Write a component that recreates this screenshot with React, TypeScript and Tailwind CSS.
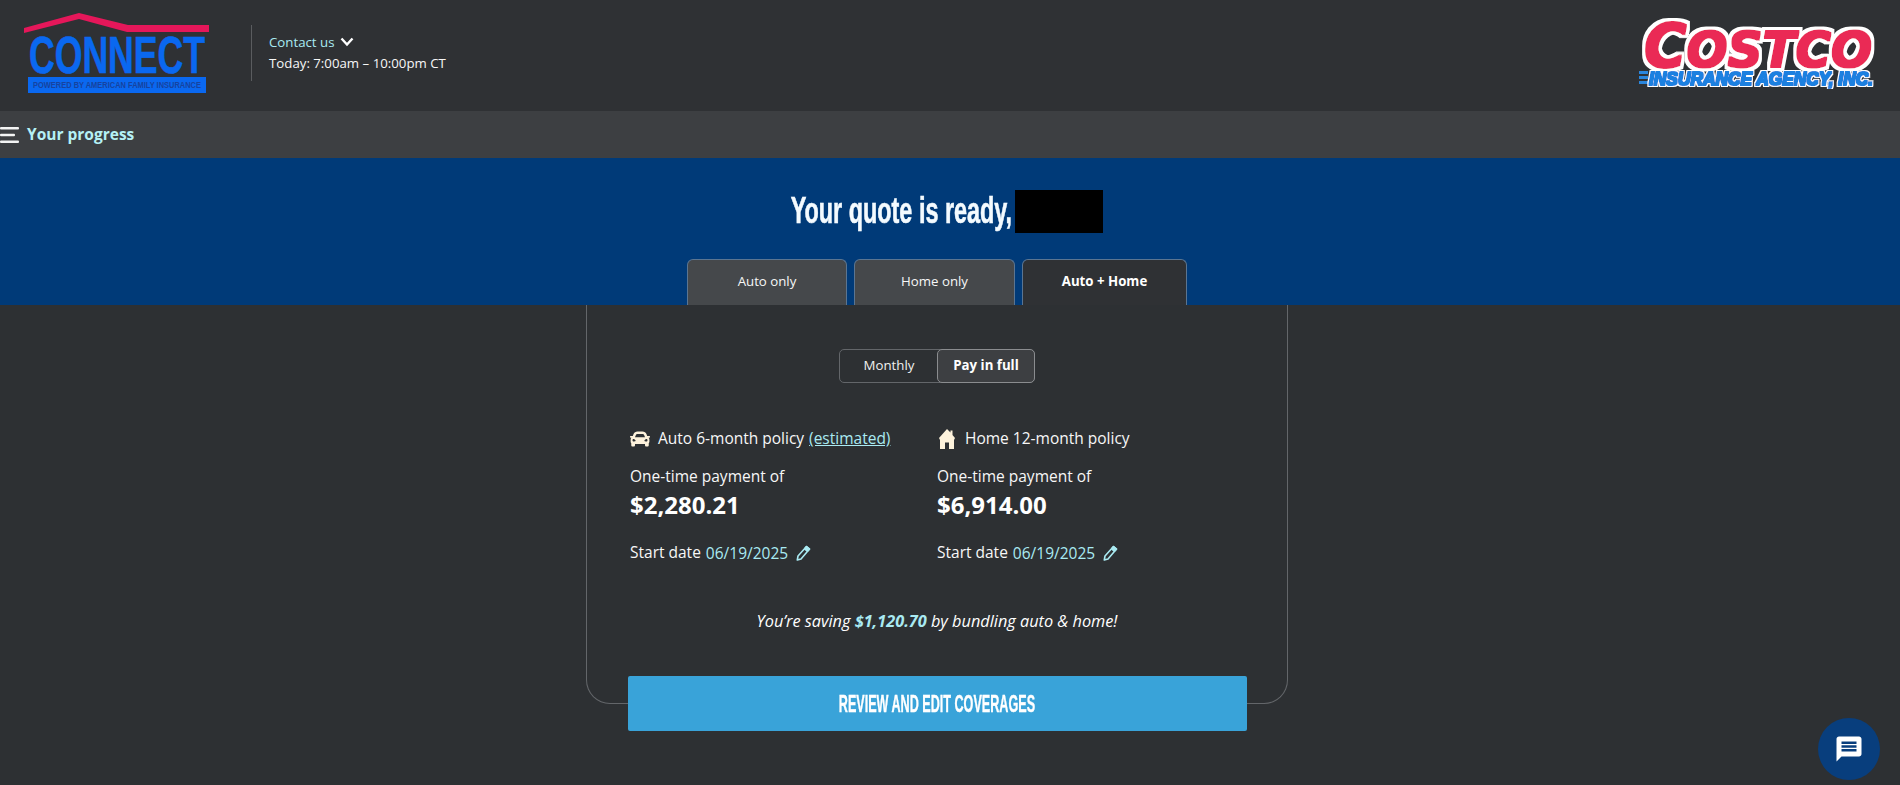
import React from "react";
import { FaCar } from "react-icons/fa";

const sans = "font-['Open_Sans',sans-serif]";
const wide = "font-['Liberation_Sans',sans-serif]";

function ConnectLogo() {
  return (
    <svg width="186" height="80" viewBox="0 0 186 80" className="block shrink-0">
      <path d="M0 15 L55 0 L104 12 L185 12 L185 19 L103 19 L55 6 L0 20 Z" fill="#e5175a" />
      <text x="5" y="60" textLength="176" lengthAdjust="spacingAndGlyphs" fontFamily="'Liberation Sans',sans-serif" fontWeight="700" fontSize="51" fill="#0a68f0" stroke="#0a68f0" strokeWidth="0.6">CONNECT</text>
      <rect x="4" y="64" width="178" height="16" fill="#0a68f0" />
      <text x="9" y="75" textLength="168" lengthAdjust="spacingAndGlyphs" fontFamily="'Liberation Sans',sans-serif" fontWeight="700" fontSize="9" fill="#17439f">POWERED BY AMERICAN FAMILY INSURANCE</text>
    </svg>
  );
}

function CostcoLogo() {
  return (
    <svg width="240" height="72" viewBox="0 0 240 72" className="block shrink-0">
      <defs>
        <filter id="costco-red" x="-5%" y="-20%" width="110%" height="140%">
          <feMorphology in="SourceAlpha" operator="dilate" radius="4" result="w" />
          <feFlood floodColor="#ffffff" />
          <feComposite in2="w" operator="in" result="white" />
          <feMorphology in="SourceAlpha" operator="dilate" radius="1.2" result="r" />
          <feFlood floodColor="#ea2a55" />
          <feComposite in2="r" operator="in" result="red" />
          <feMerge>
            <feMergeNode in="white" />
            <feMergeNode in="red" />
          </feMerge>
        </filter>
        <filter id="costco-blue" x="-3%" y="-20%" width="106%" height="140%">
          <feMorphology in="SourceAlpha" operator="dilate" radius="2.2" result="w" />
          <feFlood floodColor="#ffffff" />
          <feComposite in2="w" operator="in" result="white" />
          <feMorphology in="SourceAlpha" operator="dilate" radius="0.5" result="b" />
          <feFlood floodColor="#1f80e0" />
          <feComposite in2="b" operator="in" result="blue" />
          <feMerge>
            <feMergeNode in="white" />
            <feMergeNode in="blue" />
          </feMerge>
        </filter>
      </defs>
      <text x="6" y="50" textLength="228" lengthAdjust="spacingAndGlyphs" fontFamily="'DejaVu Sans',sans-serif" fontWeight="700" fontStyle="italic" fill="#ea2a55" filter="url(#costco-red)">
        <tspan fontSize="60">C</tspan><tspan fontSize="50">OSTCO</tspan>
      </text>
      <rect x="1" y="54" width="9" height="3" fill="#2a86dd" />
      <rect x="1" y="59" width="9" height="3" fill="#2a86dd" />
      <rect x="1" y="64" width="9" height="3" fill="#2a86dd" />
      <text x="11" y="68" textLength="224" lengthAdjust="spacingAndGlyphs" fontFamily="'Liberation Sans',sans-serif" fontWeight="700" fontStyle="italic" fontSize="18" fill="#1f80e0" filter="url(#costco-blue)">INSURANCE AGENCY, INC.</text>
    </svg>
  );
}

function Hamburger() {
  return (
    <svg width="20" height="16" viewBox="0 0 20 16" className="block shrink-0">
      <rect x="0" y="0" width="19" height="2.4" rx="1" fill="#f4f4f4" />
      <rect x="0" y="6.8" width="15" height="2.4" rx="1" fill="#f4f4f4" />
      <rect x="0" y="13.6" width="19" height="2.4" rx="1" fill="#f4f4f4" />
    </svg>
  );
}

function HouseIcon() {
  return (
    <svg width="20" height="20" viewBox="0 0 20 20" className="block shrink-0">
      <path d="M10 0 L13.5 3.5 V1.5 H15.5 V6 L18 9 L17 11 V20 H12 V13.5 H8 V20 H3 V11 L2 9 Z" fill="#fdf2dc" />
    </svg>
  );
}

function PencilIcon() {
  return (
    <svg width="15" height="16" viewBox="0 0 15 16" className="block shrink-0" fill="none" stroke="#a9eaf2" strokeWidth="1.6" strokeLinejoin="round">
      <path d="M10.5 1.5 L13.5 4 L5 14 L1.3 15 L2 11 Z" />
      <path d="M8.6 3.8 L11.6 6.4" />
      <path d="M10.5 1.5 L13.5 4 L12 5.8 L9 3.3 Z" fill="#a9eaf2" />
    </svg>
  );
}

function Policy({ icon, title, extra, amount }: { icon: React.ReactNode; title: string; extra?: boolean; amount: string }) {
  return (
    <div className="w-[307px] shrink-0">
      <div className="flex h-[24px] items-center text-[15.5px] text-[#f7f7f7]">
        <span className="flex w-[28px] shrink-0 items-center">{icon}</span>
        <span>{title}</span>
        {extra && <span className="ml-[5px] text-[#a9eaf2] underline">(estimated)</span>}
      </div>
      <div className="mt-[14px] h-[22px] text-[15.5px] leading-[22px] text-[#f7f7f7]">One-time payment of</div>
      <div className="mt-[2px] h-[32px] text-[24px] font-bold leading-[32px] text-white">{amount}</div>
      <div className="mt-[20px] flex h-[24px] items-center text-[15.5px] text-[#f7f7f7]">
        <span>Start date</span>
        <span className="ml-[5px] mt-[1px] text-[#a9eaf2]">06/19/2025</span>
        <span className="ml-[8px]"><PencilIcon /></span>
      </div>
    </div>
  );
}

export default function App() {
  return (
    <div className={`relative h-[785px] w-[1900px] overflow-hidden bg-[#2d3033] ${sans}`}>
      <header className="flex h-[111px] items-center justify-between bg-[#2f3134] pb-[6px] pl-[24px] pr-[22px]">
        <div className="flex items-center">
          <ConnectLogo />
          <div className="ml-[41px] h-[56px] w-px bg-[#5a5c5f]" />
          <div className="ml-[17px] text-[13.25px] leading-[21px]">
            <div className="flex items-center text-[#a9eaf2]">
              <span>Contact us</span>
              <svg width="14" height="10" viewBox="0 0 14 10" className="ml-[6px]" fill="none" stroke="#ffffff" strokeWidth="2.4"><path d="M1.5 1.5 L7 7.5 L12.5 1.5" /></svg>
            </div>
            <div className="text-[#f7f7f7]">Today: 7:00am – 10:00pm CT</div>
          </div>
        </div>
        <CostcoLogo />
      </header>

      <div className="flex h-[47px] items-center gap-[7px] bg-[#3d3f42]">
        <Hamburger />
        <span className="text-[15.5px] font-bold text-[#b5f1f6]">Your progress</span>
      </div>

      <div className="flex h-[147px] flex-col items-center bg-[#003a78] pr-[26px]">
        <div className="mt-[32px] flex h-[43px] items-center pl-[19px]">
          <h1 className="flex w-[222px] justify-center whitespace-nowrap pb-[2px]">
            <span className={`inline-block scale-x-[0.65] ${wide} text-[36px] font-bold leading-[41px] text-[#f4fbff] [-webkit-text-stroke:0.6px_#f4fbff]`}>Your quote is ready,</span>
          </h1>
          <div className="ml-[2px] h-[43px] w-[88px] bg-black" />
        </div>
        <div className="mt-[26px] flex h-[46px] gap-[7px]">
          <div className="flex w-[160px] items-start justify-center rounded-t-[6px] border border-b-0 border-[#5b7591] bg-[#45484b] pt-[12px] text-[13.25px] text-[#f7f7f7]">Auto only</div>
          <div className="flex w-[161px] items-start justify-center rounded-t-[6px] border border-b-0 border-[#5b7591] bg-[#45484b] pt-[12px] text-[13.25px] text-[#f7f7f7]">Home only</div>
          <div className="flex w-[165px] items-start justify-center rounded-t-[6px] border border-b-0 border-[#5b7591] bg-[#2f3134] pt-[12px] text-[13.25px] font-bold text-white">Auto + Home</div>
        </div>
      </div>

      <main className="flex justify-center pr-[26px]">
        <div className="flex h-[399px] w-[702px] flex-col items-center rounded-b-[24px] border border-t-0 border-[#63666a]">
          <div className="mt-[44px] flex h-[34px] w-[196px] shrink-0 rounded-[5px] border border-[#63666a] text-[13.25px]">
            <div className="flex w-[98px] items-center justify-center text-[#f0f0f0]">Monthly</div>
            <div className="-m-px flex flex-1 items-center justify-center rounded-[5px] border border-[#8a8c8f] bg-[#3d3f42] font-bold text-white">Pay in full</div>
          </div>
          <div className="mt-[44px] flex w-[614px] shrink-0">
            <Policy icon={<FaCar size={20} color="#fdf2dc" />} title="Auto 6-month policy" extra amount="$2,280.21" />
            <Policy icon={<HouseIcon />} title="Home 12-month policy" amount="$6,914.00" />
          </div>
          <p className="mt-[44px] h-[24px] shrink-0 text-[16.3px] italic leading-[24px] text-white">
            You’re saving <span className="font-bold text-[#a9eaf2]">$1,120.70</span> by bundling auto &amp; home!
          </p>
          <button className="mt-[43px] flex h-[55px] w-[619px] shrink-0 items-center justify-center overflow-hidden rounded-[2px] bg-[#39a3d9] text-white">
            <span className={`inline-block shrink-0 scale-x-[0.525] whitespace-nowrap ${wide} text-[24px] font-bold [-webkit-text-stroke:0.4px_#ffffff]`}>REVIEW AND EDIT COVERAGES</span>
          </button>
        </div>
      </main>

      <div className="absolute left-[1818px] top-[718px] flex h-[62px] w-[62px] items-center justify-center rounded-full bg-[#083e7d]">
        <svg width="30" height="30" viewBox="0 0 24 24" fill="#ffffff">
          <path d="M20 2H4c-1.1 0-1.99.9-1.99 2L2 22l4-4h14c1.1 0 2-.9 2-2V4c0-1.1-.9-2-2-2zm-2 12H6v-2h12v2zm0-3H6V9h12v2zm0-3H6V6h12v2z" />
        </svg>
      </div>
    </div>
  );
}
